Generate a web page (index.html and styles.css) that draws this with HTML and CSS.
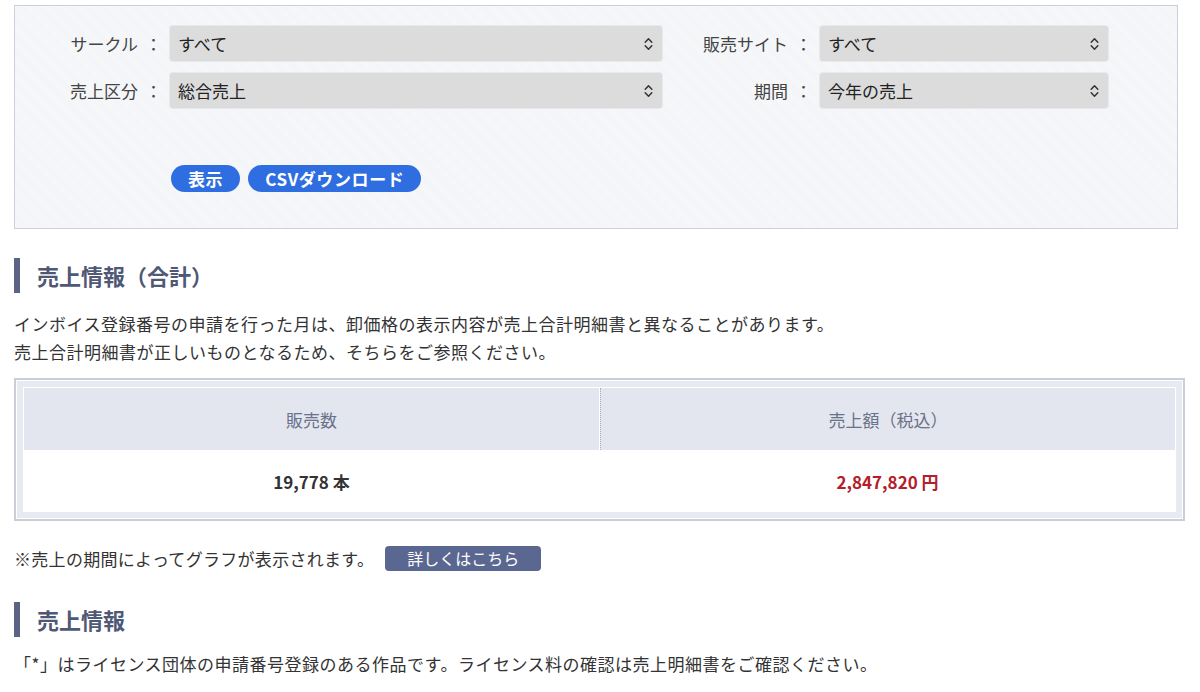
FILE: index.html
```html
<!DOCTYPE html>
<html lang="ja">
<head>
  <meta charset="UTF-8">
  <meta name="viewport" content="width=device-width, initial-scale=1.0">
  <title>売上情報</title>
  <link rel="stylesheet" href="styles.css">
</head>
<body>
  <!-- 検索条件 -->
  <div class="filter-box">
    <div class="filter-grid">
      <label class="filter-label">サークル<span class="colon">：</span></label>
      <div class="select">
        <span>すべて</span>
        <svg class="chevron" width="9" height="14" viewBox="0 0 9 14"><path d="M1.2 5.2 L4.5 1.8 L7.8 5.2 M1.2 8.8 L4.5 12.2 L7.8 8.8" fill="none" stroke="#333" stroke-width="1.5" stroke-linecap="round" stroke-linejoin="round"/></svg>
      </div>
      <label class="filter-label">販売サイト<span class="colon">：</span></label>
      <div class="select">
        <span>すべて</span>
        <svg class="chevron" width="9" height="14" viewBox="0 0 9 14"><path d="M1.2 5.2 L4.5 1.8 L7.8 5.2 M1.2 8.8 L4.5 12.2 L7.8 8.8" fill="none" stroke="#333" stroke-width="1.5" stroke-linecap="round" stroke-linejoin="round"/></svg>
      </div>
      <label class="filter-label">売上区分<span class="colon">：</span></label>
      <div class="select">
        <span>総合売上</span>
        <svg class="chevron" width="9" height="14" viewBox="0 0 9 14"><path d="M1.2 5.2 L4.5 1.8 L7.8 5.2 M1.2 8.8 L4.5 12.2 L7.8 8.8" fill="none" stroke="#333" stroke-width="1.5" stroke-linecap="round" stroke-linejoin="round"/></svg>
      </div>
      <label class="filter-label">期間<span class="colon">：</span></label>
      <div class="select">
        <span>今年の売上</span>
        <svg class="chevron" width="9" height="14" viewBox="0 0 9 14"><path d="M1.2 5.2 L4.5 1.8 L7.8 5.2 M1.2 8.8 L4.5 12.2 L7.8 8.8" fill="none" stroke="#333" stroke-width="1.5" stroke-linecap="round" stroke-linejoin="round"/></svg>
      </div>
    </div>
    <div class="filter-actions">
      <button class="btn-primary">表示</button>
      <button class="btn-primary">CSVダウンロード</button>
    </div>
  </div>

  <h2 class="section-title">売上情報（合計）</h2>
  <p class="notice">インボイス登録番号の申請を行った月は、卸価格の表示内容が売上合計明細書と異なることがあります。<br>売上合計明細書が正しいものとなるため、そちらをご参照ください。</p>

  <div class="summary">
    <table class="summary-table">
      <tr>
        <th>販売数</th>
        <th>売上額（税込）</th>
      </tr>
      <tr>
        <td>19,778 本</td>
        <td class="amount">2,847,820 円</td>
      </tr>
    </table>
  </div>

  <div class="graph-note">
    <span>※売上の期間によってグラフが表示されます。</span>
    <button class="btn-detail">詳しくはこちら</button>
  </div>

  <h2 class="section-title">売上情報</h2>
  <p class="notice">「*」はライセンス団体の申請番号登録のある作品です。ライセンス料の確認は売上明細書をご確認ください。</p>
</body>
</html>
```

FILE: styles.css
```css
body {
  font-family: "Noto Sans CJK JP", "Noto Sans", sans-serif;
  font-size: 17px;
  color: #333;
  background-color: #fff;
  margin: 0;
  padding: 5px 15px 0 14px;
}

.filter-box {
  margin-right: 7px;
  border: 1px solid #cdcfdd;
  background-color: #f3f4f8;
  background-image: repeating-linear-gradient(45deg, rgba(255, 255, 255, 0.35) 0 1px, transparent 1px 2px);
  padding: 20px 0 36px 0;
}

.filter-grid {
  display: grid;
  grid-template-columns: 147px 492px 142px 288px;
  column-gap: 8px;
  row-gap: 12px;
  align-items: center;
}

.filter-label {
  display: flex;
  justify-content: flex-end;
  color: #444;
  line-height: 24px;
}

.filter-label .colon {
  margin-left: 7px;
}

.select {
  display: flex;
  align-items: center;
  justify-content: space-between;
  height: 35px;
  padding: 0 9px 0 8px;
  background-color: #dcdcdd;
  border-radius: 3px;
  box-shadow: 0 0 0 1px #e8e9ee;
  color: #222;
}

.chevron {
  display: block;
}

.filter-actions {
  display: flex;
  gap: 8px;
  margin-top: 57px;
  padding-left: 156px;
}

.btn-primary {
  height: 27px;
  padding: 0 17px;
  border: none;
  border-radius: 14px;
  background-color: #2f6ee0;
  color: #fff;
  font-family: inherit;
  font-size: 17px;
  font-weight: bold;
  letter-spacing: 0.6px;
  line-height: 27px;
}

.section-title {
  margin: 29px 0 17px 0;
  height: 35px;
  border-left: 6px solid #5b6486;
  padding-left: 17px;
  font-size: 22px;
  font-weight: bold;
  line-height: 35px;
  color: #4f5874;
}

.notice {
  margin: 0;
  line-height: 28px;
  letter-spacing: 0.5px;
}

.summary {
  margin-top: 12px;
  border: 2px solid #cbcdd9;
  padding: 1px;
  background-color: #fff;
}

.summary-table {
  width: 100%;
  border: 6px solid #e8eaf2;
  border-collapse: separate;
  border-spacing: 1px;
  table-layout: fixed;
}

.summary-table th {
  height: 62px;
  padding: 0;
  background-color: #e3e6ef;
  color: #6a7188;
  font-weight: normal;
}

.summary-table th + th {
  border-left: 1px dotted #a9adbb;
}

.summary-table td {
  height: 60px;
  padding: 0;
  text-align: center;
  font-weight: bold;
  color: #333;
}

.summary-table td.amount {
  color: #b3202a;
}

.graph-note {
  display: flex;
  align-items: center;
  height: 25px;
  margin-top: 25px;
  letter-spacing: 0.3px;
}

.btn-detail {
  height: 25px;
  margin-left: 11px;
  padding: 0 22px;
  border: none;
  border-radius: 4px;
  background-color: #5a6891;
  color: #fff;
  font-family: inherit;
  font-size: 16px;
  line-height: 25px;
}

.graph-note + .section-title {
  margin-top: 31px;
  margin-bottom: 13px;
}
```
